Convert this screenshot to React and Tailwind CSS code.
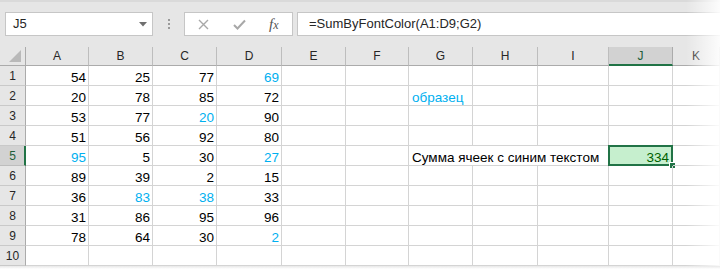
import React from "react";

const COLS = ["A", "B", "C", "D", "E", "F", "G", "H", "I", "J", "K"];
const BLUE = "#00b0f0";

// value, isBlue
const DATA = [
  [[54], [25], [77], [69, 1]],
  [[20], [78], [85], [72]],
  [[53], [77], [20, 1], [90]],
  [[51], [56], [92], [80]],
  [[95, 1], [5], [30], [27, 1]],
  [[89], [39], [2], [15]],
  [[36], [83, 1], [38, 1], [33]],
  [[31], [86], [95], [96]],
  [[78], [64], [30], [2, 1]],
  [],
];

function ColHeader({ letter }) {
  const sel = letter === "J";
  return (
    <div
      className={
        sel
          ? "bg-[#d2d2d2] border-r border-[#ababab] border-b-2 border-b-[#217346] text-[#1f5e3a] text-center text-[12px] leading-[18px]"
          : "bg-[#e6e6e6] border-r border-[#bdbdbd] border-b border-b-[#ababab] text-[#262626] text-center text-[12px] leading-[19px]"
      }
    >
      {letter}
    </div>
  );
}

function RowHeader({ n }) {
  const sel = n === 5;
  return (
    <div
      className={
        sel
          ? "bg-[#d2d2d2] border-r-2 border-[#217346] border-b border-b-[#bdbdbd] text-[#1f5e3a] text-center text-[12px] leading-[19px] pt-[1px] pl-[1px]"
          : "bg-[#e6e6e6] border-r border-[#ababab] border-b border-b-[#c9c9c9] text-[#262626] text-center text-[12px] leading-[19px] pt-[1px]"
      }
    >
      {n}
    </div>
  );
}

function Cell({ r, c }) {
  const row = DATA[r - 1];
  const cell = c < 4 ? row[c] : null;
  const letter = COLS[c];
  let content = null;
  let cls =
    "relative border-b border-[#d4d4d4] text-[13.5px] leading-[15px] pt-[4px] whitespace-nowrap";
  let noRight = r === 5 && (letter === "G" || letter === "H");
  if (!noRight) cls += " border-r";
  if (cell) {
    content = (
      <div className="text-right pr-[2px]" style={{ color: cell[1] ? BLUE : "#000" }}>
        {cell[0]}
      </div>
    );
  }
  if (r === 2 && letter === "G") {
    content = <div className="pl-[3px] text-[#00b0f0]">образец</div>;
  }
  if (r === 5 && letter === "G") {
    content = <div className="pl-[3px] text-black">Сумма ячеек с синим текстом</div>;
  }
  if (r === 5 && letter === "J") {
    return (
      <div className="relative border-r border-b border-[#d4d4d4] bg-[#c6efce] text-[13.5px] leading-[15px] pt-[4px]">
        <div className="text-right pr-[3px] text-[#006100]">334</div>
        <div className="absolute left-[-1px] top-[-1px] right-[-1px] bottom-[-1px] border-2 border-[#217346]" />
        <div className="absolute right-[-4px] bottom-[-4px] w-[7px] h-[7px] bg-[#217346] border border-white" />
      </div>
    );
  }
  return <div className={cls}>{content}</div>;
}

export default function App() {
  const rows = [];
  for (let r = 1; r <= 10; r++) {
    rows.push(<RowHeader key={"h" + r} n={r} />);
    for (let c = 0; c < 11; c++) {
      rows.push(<Cell key={r + "-" + c} r={r} c={c} />);
    }
  }
  return (
    <div
      className="relative w-[720px] h-[269px] overflow-hidden bg-white"
      style={{ fontFamily: '"Liberation Sans", Arial, sans-serif' }}
    >
      {/* formula bar band */}
      <div className="h-[47px] bg-[#e6e6e6] border-t-2 border-[#dadada] flex items-start pt-[10px]">
        <div className="ml-[5px] w-[148px] h-[24px] bg-white border border-[#c6c6c6] flex items-center justify-between pl-[7px] pr-[5px]">
          <span className="text-[13px] text-[#262626]">J5</span>
          <svg width="8" height="5" viewBox="0 0 8 5">
            <path d="M0 0 L8 0 L4 4.5 Z" fill="#6f6f6f" />
          </svg>
        </div>
        <div className="w-[31px] h-[24px] flex flex-col items-center justify-center gap-[2px]">
          <div className="w-[2px] h-[2px] bg-[#9a9a9a]" />
          <div className="w-[2px] h-[2px] bg-[#9a9a9a]" />
          <div className="w-[2px] h-[2px] bg-[#9a9a9a]" />
        </div>
        <div className="w-[109px] h-[24px] bg-white border border-[#c6c6c6] flex items-center">
          <svg className="ml-[13px]" width="11" height="11" viewBox="0 0 11 11">
            <path d="M1 1 L10 10 M10 1 L1 10" stroke="#a8a8a8" strokeWidth="1.4" />
          </svg>
          <svg className="ml-[24px]" width="13" height="11" viewBox="0 0 13 11">
            <path d="M1 6 L4.5 9.5 L12 1.5" stroke="#a8a8a8" strokeWidth="2" fill="none" />
          </svg>
          <span
            className="ml-[23px] text-[15px] italic text-[#555]"
            style={{ fontFamily: '"Liberation Serif", "Times New Roman", serif' }}
          >
            f<span className="text-[12px]">x</span>
          </span>
        </div>
        <div className="ml-[4px] flex-1 h-[24px] bg-white border border-[#c6c6c6] border-r-0 flex items-center pl-[11px]">
          <span className="text-[13px] text-[#262626]">=SumByFontColor(A1:D9;G2)</span>
        </div>
      </div>

      {/* sheet grid */}
      <div className="grid grid-cols-[26px_63px_64px_64px_65px_64px_63px_64px_65px_71px_64px_1fr] grid-rows-[19px_repeat(10,20px)]">
        <div className="bg-[#e6e6e6] border-r border-[#ababab] border-b border-b-[#ababab] flex items-end justify-end pr-[4px] pb-[3px]">
          <svg width="12" height="12" viewBox="0 0 12 12">
            <path d="M12 0 L12 12 L0 12 Z" fill="#b9b9b9" />
          </svg>
        </div>
        {COLS.map((l) => (
          <ColHeader key={l} letter={l} />
        ))}
        {rows}
      </div>

      {/* right & bottom fade (screenshot shadow) */}
      <div className="pointer-events-none absolute right-0 top-0 bottom-0 w-[34px] bg-gradient-to-r from-white/0 to-white/90" />
      <div className="pointer-events-none absolute left-0 right-0 bottom-0 h-[3px] bg-gradient-to-b from-[#e8e8e8] to-white" />
    </div>
  );
}
